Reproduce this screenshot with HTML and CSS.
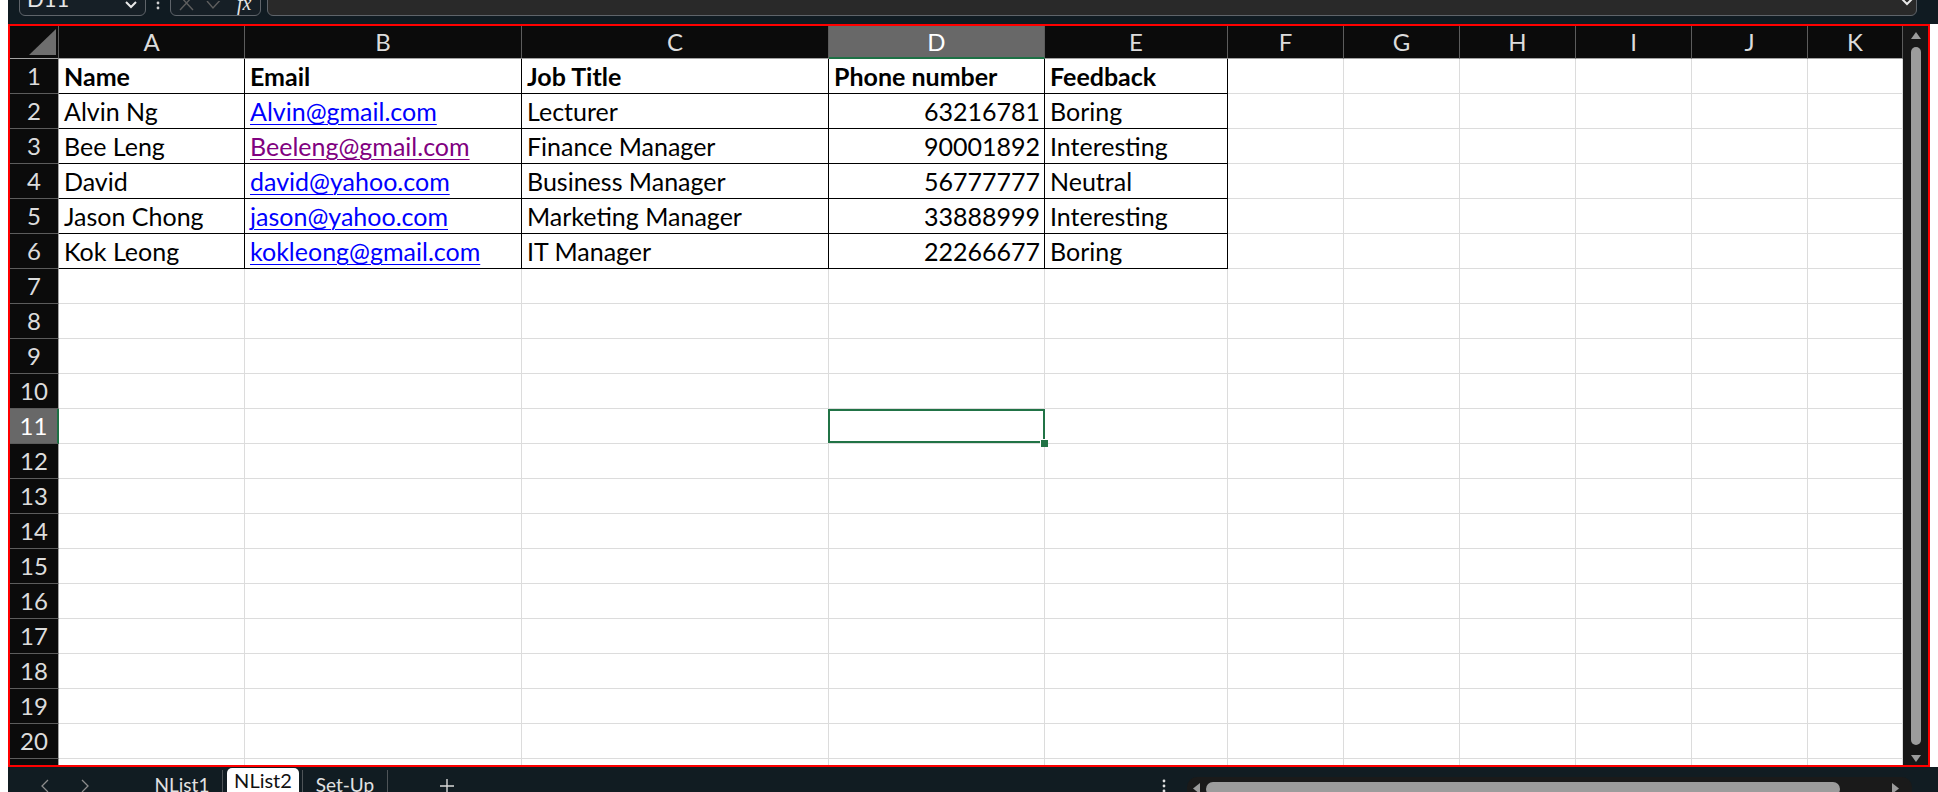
FILE: index.html
```html
<!DOCTYPE html>
<html lang="en">
<head>
<meta charset="utf-8">
<title>NList2</title>
<link rel="stylesheet" href="styles.css">
</head>
<body>
<div class="app">
  <header class="fbar">
    <div class="namebox">
      <span class="nb-text">D11</span>
      <svg class="nb-chev" width="12" height="8" viewBox="0 0 12 8"><polyline points="1,1 6,6 11,1" fill="none" stroke="#e8e8e8" stroke-width="2"/></svg>
    </div>
    <svg class="vdots" width="4" height="12" viewBox="0 0 4 12"><circle cx="2" cy="3" r="1.4" fill="#cfcfcf"/><circle cx="2" cy="8" r="1.4" fill="#cfcfcf"/></svg>
    <div class="fxbox">
      <svg class="fx-x" width="16" height="14" viewBox="0 0 16 14"><path d="M1 -4 L14 10 M14 -4 L1 10" stroke="#5e5e5e" stroke-width="1.4" fill="none"/></svg>
      <svg class="fx-ok" width="18" height="10" viewBox="0 0 18 10"><path d="M1 0 L7 7 L17 -4" stroke="#5e5e5e" stroke-width="1.4" fill="none"/></svg>
      <span class="fx-t">fx</span>
    </div>
    <div class="finput">
      <svg class="fi-chev" width="12" height="8" viewBox="0 0 12 8"><polyline points="1,1 6,6 11,1" fill="none" stroke="#e8e8e8" stroke-width="2"/></svg>
    </div>
  </header>

  <main class="sheet">
    <div class="grid">
      <div class="corner"><svg class="tri" width="28" height="27" viewBox="0 0 28 27"><polygon points="27,0 27,26 0,26" fill="#6e6e6e"/></svg></div>
      <div class="ch">A</div><div class="ch">B</div><div class="ch">C</div><div class="ch sel">D</div><div class="ch">E</div><div class="ch">F</div><div class="ch">G</div><div class="ch">H</div><div class="ch">I</div><div class="ch">J</div><div class="ch">K</div>

      <div class="rh">1</div>
      <div class="c b bold">Name</div><div class="c b bold">Email</div><div class="c b bold">Job Title</div><div class="c b bold">Phone number</div><div class="c b bold">Feedback</div>
      <div class="c"></div><div class="c"></div><div class="c"></div><div class="c"></div><div class="c"></div><div class="c"></div>

      <div class="rh">2</div>
      <div class="c b">Alvin Ng</div><div class="c b"><a class="lnk" href="#">Alvin@gmail.com</a></div><div class="c b">Lecturer</div><div class="c b num">63216781</div><div class="c b">Boring</div>
      <div class="c"></div><div class="c"></div><div class="c"></div><div class="c"></div><div class="c"></div><div class="c"></div>

      <div class="rh">3</div>
      <div class="c b">Bee Leng</div><div class="c b"><a class="lnk visited" href="#">Beeleng@gmail.com</a></div><div class="c b">Finance Manager</div><div class="c b num">90001892</div><div class="c b">Interesting</div>
      <div class="c"></div><div class="c"></div><div class="c"></div><div class="c"></div><div class="c"></div><div class="c"></div>

      <div class="rh">4</div>
      <div class="c b">David</div><div class="c b"><a class="lnk" href="#">david@yahoo.com</a></div><div class="c b">Business Manager</div><div class="c b num">56777777</div><div class="c b">Neutral</div>
      <div class="c"></div><div class="c"></div><div class="c"></div><div class="c"></div><div class="c"></div><div class="c"></div>

      <div class="rh">5</div>
      <div class="c b">Jason Chong</div><div class="c b"><a class="lnk" href="#">jason@yahoo.com</a></div><div class="c b">Marketing Manager</div><div class="c b num">33888999</div><div class="c b">Interesting</div>
      <div class="c"></div><div class="c"></div><div class="c"></div><div class="c"></div><div class="c"></div><div class="c"></div>

      <div class="rh">6</div>
      <div class="c b">Kok Leong</div><div class="c b"><a class="lnk" href="#">kokleong@gmail.com</a></div><div class="c b">IT Manager</div><div class="c b num">22266677</div><div class="c b">Boring</div>
      <div class="c"></div><div class="c"></div><div class="c"></div><div class="c"></div><div class="c"></div><div class="c"></div>

      <div class="rh">7</div><div class="c"></div><div class="c"></div><div class="c"></div><div class="c"></div><div class="c"></div><div class="c"></div><div class="c"></div><div class="c"></div><div class="c"></div><div class="c"></div><div class="c"></div>
      <div class="rh">8</div><div class="c"></div><div class="c"></div><div class="c"></div><div class="c"></div><div class="c"></div><div class="c"></div><div class="c"></div><div class="c"></div><div class="c"></div><div class="c"></div><div class="c"></div>
      <div class="rh">9</div><div class="c"></div><div class="c"></div><div class="c"></div><div class="c"></div><div class="c"></div><div class="c"></div><div class="c"></div><div class="c"></div><div class="c"></div><div class="c"></div><div class="c"></div>
      <div class="rh">10</div><div class="c"></div><div class="c"></div><div class="c"></div><div class="c"></div><div class="c"></div><div class="c"></div><div class="c"></div><div class="c"></div><div class="c"></div><div class="c"></div><div class="c"></div>
      <div class="rh sel">11</div><div class="c"></div><div class="c"></div><div class="c"></div><div class="c active"></div><div class="c"></div><div class="c"></div><div class="c"></div><div class="c"></div><div class="c"></div><div class="c"></div><div class="c"></div>
      <div class="rh">12</div><div class="c"></div><div class="c"></div><div class="c"></div><div class="c"></div><div class="c"></div><div class="c"></div><div class="c"></div><div class="c"></div><div class="c"></div><div class="c"></div><div class="c"></div>
      <div class="rh">13</div><div class="c"></div><div class="c"></div><div class="c"></div><div class="c"></div><div class="c"></div><div class="c"></div><div class="c"></div><div class="c"></div><div class="c"></div><div class="c"></div><div class="c"></div>
      <div class="rh">14</div><div class="c"></div><div class="c"></div><div class="c"></div><div class="c"></div><div class="c"></div><div class="c"></div><div class="c"></div><div class="c"></div><div class="c"></div><div class="c"></div><div class="c"></div>
      <div class="rh">15</div><div class="c"></div><div class="c"></div><div class="c"></div><div class="c"></div><div class="c"></div><div class="c"></div><div class="c"></div><div class="c"></div><div class="c"></div><div class="c"></div><div class="c"></div>
      <div class="rh">16</div><div class="c"></div><div class="c"></div><div class="c"></div><div class="c"></div><div class="c"></div><div class="c"></div><div class="c"></div><div class="c"></div><div class="c"></div><div class="c"></div><div class="c"></div>
      <div class="rh">17</div><div class="c"></div><div class="c"></div><div class="c"></div><div class="c"></div><div class="c"></div><div class="c"></div><div class="c"></div><div class="c"></div><div class="c"></div><div class="c"></div><div class="c"></div>
      <div class="rh">18</div><div class="c"></div><div class="c"></div><div class="c"></div><div class="c"></div><div class="c"></div><div class="c"></div><div class="c"></div><div class="c"></div><div class="c"></div><div class="c"></div><div class="c"></div>
      <div class="rh">19</div><div class="c"></div><div class="c"></div><div class="c"></div><div class="c"></div><div class="c"></div><div class="c"></div><div class="c"></div><div class="c"></div><div class="c"></div><div class="c"></div><div class="c"></div>
      <div class="rh">20</div><div class="c"></div><div class="c"></div><div class="c"></div><div class="c"></div><div class="c"></div><div class="c"></div><div class="c"></div><div class="c"></div><div class="c"></div><div class="c"></div><div class="c"></div>
      <div class="rh">21</div><div class="c"></div><div class="c"></div><div class="c"></div><div class="c"></div><div class="c"></div><div class="c"></div><div class="c"></div><div class="c"></div><div class="c"></div><div class="c"></div><div class="c"></div>
    </div>
    <div class="vscroll">
      <svg class="vs-up" width="12" height="8" viewBox="0 0 12 8"><polygon points="6,0 11,7 1,7" fill="#9c9c9c"/></svg>
      <div class="vs-thumb"></div>
      <svg class="vs-down" width="12" height="8" viewBox="0 0 12 8"><polygon points="1,0 11,0 6,7" fill="#9c9c9c"/></svg>
    </div>
  </main>

  <footer class="tabs">
    <div class="navbtn"><svg width="8" height="14" viewBox="0 0 8 14"><polyline points="7,1 1,7 7,13" fill="none" stroke="#8c8c8c" stroke-width="1.3"/></svg></div>
    <div class="navbtn"><svg width="8" height="14" viewBox="0 0 8 14"><polyline points="1,1 7,7 1,13" fill="none" stroke="#8c8c8c" stroke-width="1.3"/></svg></div>
    <div class="tab t1">NList1</div>
    <div class="tsep"></div>
    <div class="tab active">NList2</div>
    <div class="tsep"></div>
    <div class="tab t3">Set-Up</div>
    <div class="tsep"></div>
    <div class="addbtn"><svg width="16" height="16" viewBox="0 0 16 16"><path d="M8 1 V16 M1 8 H15" stroke="#d8d8d8" stroke-width="1.4"/></svg></div>
    <div class="spacer"></div>
    <svg class="tdots" width="4" height="14" viewBox="0 0 4 14"><circle cx="2" cy="2" r="1.4" fill="#e0e0e0"/><circle cx="2" cy="7" r="1.4" fill="#e0e0e0"/><circle cx="2" cy="12" r="1.4" fill="#e0e0e0"/></svg>
    <div class="hscroll">
      <svg class="hs-l" width="8" height="12" viewBox="0 0 8 12"><polygon points="7,0 7,11 0,5.5" fill="#9c9c9c"/></svg>
      <div class="hs-thumb"></div>
      <svg class="hs-r" width="8" height="12" viewBox="0 0 8 12"><polygon points="0,0 0,11 7,5.5" fill="#9c9c9c"/></svg>
    </div>
  </footer>
</div>
</body>
</html>
```
FILE: styles.css
```css
* { box-sizing: border-box; margin: 0; padding: 0; }
html, body { width: 1938px; height: 792px; overflow: hidden; }
body { background: #ffffff; font-family: Lato, "Liberation Sans", sans-serif; }

.app { margin-left: 8px; height: 792px; display: flex; flex-direction: column; }

/* formula bar (cut at top) */
.fbar { flex: none; height: 24px; background: #101b22; display: flex; align-items: flex-start; overflow: hidden; }
.namebox { flex: none; margin-left: 11px; margin-top: -18px; width: 127px; height: 34px; border: 1px solid #5f646a; border-radius: 6px; background: #161f26; display: flex; align-items: center; padding-left: 7px; }
.nb-text { color: #e6e6e6; font-size: 22px; line-height: 34px; flex: 1; }
.nb-chev { margin-right: 8px; margin-top: 12px; }
.vdots { flex: none; margin-left: 10px; margin-top: 0; }
.fxbox { flex: none; margin-left: 10px; margin-top: -18px; width: 91px; height: 34px; border: 1px solid #5f646a; border-radius: 6px; background: #161f26; position: relative; }
.fx-x { position: absolute; left: 8px; top: 17px; }
.fx-ok { position: absolute; left: 35px; top: 18px; }
.fx-t { position: absolute; left: 66px; top: 9px; font-family: "Liberation Serif", serif; font-style: italic; color: #e6e6e6; font-size: 20px; line-height: 22px; }
.finput { flex: none; margin-left: 6px; margin-top: -18px; width: 1650px; height: 34px; border: 1px solid #5f646a; border-radius: 6px; background: #292929; position: relative; }
.fi-chev { position: absolute; right: 3px; top: 15px; }

/* sheet */
.sheet { flex: none; height: 743px; margin-right: 8px; border: 2px solid #ff0000; display: flex; background: #ffffff; }
.grid { flex: 1; min-width: 0; display: grid; grid-template-columns: 49px 186px 277px 307px 216px 183px repeat(5, 116px) 1fr; grid-template-rows: 33px repeat(21, 35px); overflow: hidden; }

.corner { background: #0b0b0b; border-right: 1px solid #5c5c5c; border-bottom: 1px solid #a3a3a3; position: relative; }
.tri { position: absolute; left: 19px; top: 3px; }

.ch { background: #0b0b0b; color: #dcdcdc; font-size: 24px; line-height: 32px; text-align: center; border-right: 1px solid #5c5c5c; border-bottom: 1px solid #a3a3a3; }
.ch.sel { background: #686868; color: #ffffff; border-bottom: 2px solid #1e7145; }

.rh { background: #0b0b0b; color: #dcdcdc; font-size: 24px; line-height: 34px; text-align: center; border-bottom: 1px solid #5c5c5c; border-right: 1px solid #a3a3a3; overflow: hidden; }
.rh.sel { background: #686868; color: #ffffff; border-right: 2px solid #1e7145; }

.c { border-right: 1px solid #dcdcdc; border-bottom: 1px solid #dcdcdc; font-size: 25px; line-height: 34px; padding: 0 4px 0 5px; white-space: nowrap; color: #000000; }
.c.b { border-right-color: #000000; border-bottom-color: #000000; }
.bold { font-weight: 700; }
.num { text-align: right; }
.lnk { color: #0000ff; text-decoration: underline; text-decoration-thickness: 1px; text-underline-offset: 3px; }
.lnk.visited { color: #800080; }

.c.active { position: relative; }
.c.active::before { content: ""; position: absolute; left: -1px; top: 0; right: -1px; bottom: 0; border: 2px solid #217346; }
.c.active::after { content: ""; position: absolute; right: -4px; bottom: -4px; width: 7px; height: 7px; background: #217346; border-left: 1px solid #fff; border-top: 1px solid #fff; }

/* vertical scrollbar */
.vscroll { flex: none; width: 25px; background: #171717; display: flex; flex-direction: column; align-items: center; padding-top: 6px; }
.vs-up { flex: none; }
.vs-thumb { flex: none; width: 10px; height: 698px; margin-top: 7px; background: #9c9c9c; border-radius: 5px; }
.vs-down { flex: none; margin-top: 10px; }

/* sheet tabs */
.tabs { flex: none; height: 25px; background: #111c22; display: flex; align-items: stretch; overflow: hidden; padding-left: 17px; color: #e2e2e2; font-size: 19px; }
.navbtn { width: 40px; display: flex; justify-content: center; padding-top: 12px; }
.tab { white-space: nowrap; text-align: center; padding-top: 7px; line-height: 22px; }
.t1 { width: 80px; margin-left: 37px; }
.tsep { width: 1px; background: #4e5458; margin-top: 3px; }
.tab.active { width: 72px; margin: 1px 3px 0 4px; padding-top: 1px; background: #ffffff; color: #111111; font-size: 20px; font-weight: 400; border-radius: 5px 5px 0 0; }
.t3 { width: 84px; }
.addbtn { width: 40px; margin-left: 39px; display: flex; justify-content: center; padding-top: 11px; }
.spacer { flex: 1; }
.tdots { flex: none; margin-top: 12px; }
.hscroll { flex: none; width: 725px; margin-left: 21px; margin-right: 26px; margin-top: 10px; height: 24px; background: #1a1a1a; border-radius: 10px; display: flex; align-items: flex-start; padding-top: 5px; }
.hs-l { flex: none; margin-left: 6px; margin-top: 1px; }
.hs-thumb { flex: none; width: 634px; height: 14px; margin-left: 5px; background: #9c9c9c; border-radius: 7px; }
.hs-r { flex: none; margin-left: 52px; margin-top: 1px; }
```
